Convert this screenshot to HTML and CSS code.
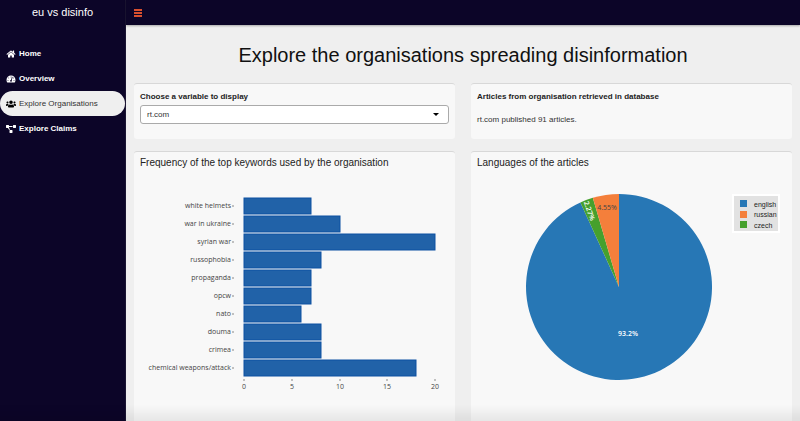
FILE: index.html
```html
<!DOCTYPE html>
<html lang="en">
<head>
<meta charset="utf-8">
<meta name="viewport" content="width=device-width, initial-scale=1">
<title>eu vs disinfo</title>
<link rel="stylesheet" href="styles.css">
</head>
<body>
<div class="app">
  <aside class="sidebar">
    <a class="brand" href="#">eu vs disinfo</a>
    <nav class="menu">
      <a class="menu-item" href="#">
        <svg class="icon" viewBox="0 0 576 512" aria-hidden="true"><path d="M280.37 148.26L96 300.11V464a16 16 0 0 0 16 16l112.06-.29a16 16 0 0 0 15.92-16V368a16 16 0 0 1 16-16h64a16 16 0 0 1 16 16v95.64a16 16 0 0 0 16 16.05L464 480a16 16 0 0 0 16-16V300L295.67 148.26a12.19 12.19 0 0 0-15.3 0zM571.6 251.47L488 182.56V44.05a12 12 0 0 0-12-12h-56a12 12 0 0 0-12 12v72.61L318.47 43a48 48 0 0 0-61 0L4.34 251.47a12 12 0 0 0-1.6 16.9l25.5 31A12 12 0 0 0 45.15 301l235.22-193.74a12.19 12.19 0 0 1 15.3 0L530.9 301a12 12 0 0 0 16.9-1.6l25.5-31a12 12 0 0 0-1.7-16.93z"/></svg>
        <span>Home</span>
      </a>
      <a class="menu-item" href="#">
        <svg class="icon" viewBox="0 0 576 512" aria-hidden="true"><path d="M288 32C128.94 32 0 160.94 0 320c0 52.8 14.25 102.26 39.06 144.8 5.61 9.62 16.3 15.2 27.44 15.2h443c11.14 0 21.83-5.58 27.44-15.2C561.75 422.26 576 372.8 576 320c0-159.06-128.94-288-288-288zm0 64c14.71 0 26.58 10.13 30.32 23.65-1.11 2.26-2.64 4.23-3.45 6.67l-9.22 27.67c-5.13 3.49-10.97 6.01-17.64 6.01-17.67 0-32-14.33-32-32S270.33 96 288 96zM96 384c-17.67 0-32-14.33-32-32s14.33-32 32-32 32 14.33 32 32-14.33 32-32 32zm48-160c-17.67 0-32-14.33-32-32s14.33-32 32-32 32 14.33 32 32-14.33 32-32 32zm246.77-72.41l-61.33 184C343.13 347.33 352 364.54 352 384c0 11.72-3.38 22.55-8.88 32H232.88c-5.5-9.45-8.88-20.28-8.88-32 0-33.94 26.5-61.43 59.9-63.59l61.34-184.01c4.17-12.56 17.73-19.45 30.36-15.17 12.57 4.19 19.35 17.79 15.17 30.36zm14.66 57.2l15.52-46.55c3.47-1.29 7.13-2.23 11.05-2.23 17.67 0 32 14.33 32 32s-14.33 32-32 32c-11.38-.01-20.89-6.28-26.57-15.22zM480 384c-17.67 0-32-14.33-32-32s14.33-32 32-32 32 14.33 32 32-14.33 32-32 32z"/></svg>
        <span>Overview</span>
      </a>
      <a class="menu-item menu-item-active" href="#" aria-current="page">
        <svg class="icon" viewBox="0 0 640 512" aria-hidden="true"><path d="M96 224c35.3 0 64-28.7 64-64s-28.7-64-64-64-64 28.7-64 64 28.7 64 64 64zm448 0c35.3 0 64-28.7 64-64s-28.7-64-64-64-64 28.7-64 64 28.7 64 64 64zm32 32h-64c-17.6 0-33.5 7.1-45.1 18.6 40.3 22.1 68.9 62 75.1 109.4h66c17.7 0 32-14.3 32-32v-32c0-35.3-28.7-64-64-64zm-256 0c61.9 0 112-50.1 112-112S381.9 32 320 32 208 82.1 208 144s50.1 112 112 112zm76.8 32h-8.3c-20.8 10-43.9 16-68.5 16s-47.6-6-68.5-16h-8.3C179.6 288 128 339.6 128 403.2V432c0 26.5 21.5 48 48 48h288c26.5 0 48-21.5 48-48v-28.8c0-63.6-51.6-115.2-115.2-115.2zm-223.7-13.4C161.5 263.1 145.6 256 128 256H64c-35.3 0-64 28.7-64 64v32c0 17.7 14.3 32 32 32h65.9c6.3-47.4 34.9-87.3 75.2-109.4z"/></svg>
        <span>Explore Organisations</span>
      </a>
      <a class="menu-item" href="#">
        <svg class="icon" viewBox="0 0 640 512" aria-hidden="true"><path d="M384 320H256c-17.67 0-32 14.33-32 32v128c0 17.67 14.33 32 32 32h128c17.67 0 32-14.33 32-32V352c0-17.67-14.33-32-32-32zM192 32c0-17.67-14.33-32-32-32H32C14.33 0 0 14.33 0 32v128c0 17.67 14.33 32 32 32h95.72l73.16 128.04C211.98 300.98 232.4 288 256 288h.28L192 175.51V128h224V64H192V32zM608 0H480c-17.67 0-32 14.33-32 32v128c0 17.67 14.33 32 32 32h128c17.67 0 32-14.33 32-32V32c0-17.67-14.33-32-32-32z"/></svg>
        <span>Explore Claims</span>
      </a>
    </nav>
  </aside>

  <div class="page">
    <header class="topbar">
      <button class="toggle" type="button" aria-label="Toggle navigation">
        <svg class="toggle-icon" viewBox="0 0 8 8" aria-hidden="true"><path d="M0 0h8v2H0zM0 3h8v2H0zM0 6h8v2H0z"/></svg>
      </button>
    </header>

    <main class="content">
      <h1 class="title">Explore the organisations spreading disinformation</h1>
      <div class="grid">
        <section class="card card-small">
          <label class="label" for="variable">Choose a variable to display</label>
          <div class="select-wrap">
            <select class="select" id="variable">
              <option>rt.com</option>
            </select>
          </div>
        </section>

        <section class="card card-small">
          <h2 class="label">Articles from organisation retrieved in database</h2>
          <p class="text">rt.com published 91 articles.</p>
        </section>

        <section class="card">
          <h2 class="card-title">Frequency of the top keywords used by the organisation</h2>
          <svg class="chart" viewBox="0 0 309 250" role="img" aria-label="Keyword frequency">
            <g class="bars">
              <rect x="104" y="24" width="67" height="16"/>
              <rect x="104" y="42" width="96" height="16"/>
              <rect x="104" y="60" width="191" height="16"/>
              <rect x="104" y="78" width="77" height="16"/>
              <rect x="104" y="96" width="67" height="16"/>
              <rect x="104" y="114" width="67" height="16"/>
              <rect x="104" y="132" width="57" height="16"/>
              <rect x="104" y="150" width="77" height="16"/>
              <rect x="104" y="168" width="77" height="16"/>
              <rect x="104" y="186" width="172" height="16"/>
            </g>
            <path class="ticks" d="M92 32h2M92 50h2M92 68h2M92 86h2M92 104h2M92 122h2M92 140h2M92 158h2M92 176h2M92 194h2M104 205v2M152 205v2M200 205v2M247 205v2M295 205v2"/>
            <g class="axis axis-y">
              <text x="91" y="34">white helmets</text>
              <text x="91" y="52">war in ukraine</text>
              <text x="91" y="70">syrian war</text>
              <text x="91" y="88">russophobia</text>
              <text x="91" y="106">propaganda</text>
              <text x="91" y="124">opcw</text>
              <text x="91" y="142">nato</text>
              <text x="91" y="160">douma</text>
              <text x="91" y="178">crimea</text>
              <text x="91" y="196">chemical weapons/attack</text>
            </g>
            <g class="axis axis-x">
              <text x="104" y="215">0</text>
              <text x="152" y="215">5</text>
              <text x="200" y="215">10</text>
              <text x="247" y="215">15</text>
              <text x="295" y="215">20</text>
            </g>
          </svg>
        </section>

        <section class="card">
          <h2 class="card-title">Languages of the articles</h2>
          <svg class="chart" viewBox="0 0 309 250" role="img" aria-label="Share of languages">
            <path class="english" d="M142 113V20A93 93 0 1 1 103.4 28.4Z"/>
            <path class="czech" d="M142 113L103.4 28.4A93 93 0 0 1 115.8 23.8Z"/>
            <path class="russian" d="M142 113L115.8 23.8A93 93 0 0 1 142 20Z"/>
            <text class="slice slice-light" x="151" y="162">93.2%</text>
            <text class="slice slice-dark" x="130" y="36">4.55%</text>
            <text class="slice slice-light" transform="translate(112 37) rotate(70)" y="2">2.27%</text>
            <rect class="legend" x="256" y="21" width="46" height="37"/>
            <rect class="english" x="263" y="26" width="7" height="7"/>
            <rect class="russian" x="263" y="37" width="7" height="7"/>
            <rect class="czech" x="263" y="47" width="7" height="7"/>
            <g class="legend-text">
              <text x="277" y="33">english</text>
              <text x="277" y="43">russian</text>
              <text x="277" y="54">czech</text>
            </g>
          </svg>
        </section>
      </div>
    </main>
  </div>
</div>
</body>
</html>
```
FILE: styles.css
```css
* {
  box-sizing: border-box;
}

body {
  margin: 0;
  font-family: "Liberation Sans", Arial, sans-serif;
  font-size: 8px;
  line-height: 12px;
  color: #333;
  background: #efefef;
}

h1, h2, p {
  margin: 0;
  font-weight: 400;
}

.app {
  display: flex;
  height: 100vh;
  overflow: hidden;
}

.app::after {
  content: "";
  position: fixed;
  inset: auto 0 0 0;
  height: 16px;
  background: linear-gradient(transparent, rgba(0, 0, 0, 0.07));
  pointer-events: none;
}

.sidebar {
  flex: 0 0 126px;
  background: #0c0528;
  border-right: 1px solid #1b1533;
}

.brand {
  display: block;
  height: 25px;
  line-height: 25px;
  font-size: 11px;
  text-align: center;
  color: #fff;
  text-decoration: none;
}

.menu {
  display: flex;
  flex-direction: column;
  padding-top: 16px;
}

.menu-item {
  display: flex;
  align-items: center;
  gap: 3px;
  height: 25px;
  padding-left: 6px;
  font-weight: 700;
  color: #fff;
  text-decoration: none;
}

.menu-item-active {
  font-weight: 400;
  color: #333;
  background: #efefef;
  border-radius: 13px;
}

.icon {
  width: 10px;
  height: 8px;
  fill: currentColor;
}

.menu-item-active .icon {
  fill: #000;
}

.page {
  flex: 1;
  min-width: 0;
}

.topbar {
  display: flex;
  align-items: center;
  height: 25px;
  padding-left: 8px;
  background: #0c0528;
  box-shadow: 0 1px 2px rgba(0, 0, 0, 0.3);
}

.toggle {
  display: flex;
  padding: 0;
  border: 0;
  background: none;
}

.toggle-icon {
  width: 8px;
  height: 8px;
  fill: #d9502f;
}

.content {
  padding: 18px 8px;
}

.title {
  margin-bottom: 16px;
  font-size: 20px;
  line-height: 24px;
  text-align: center;
  color: #111;
}

.grid {
  display: grid;
  grid-template-columns: 1fr 1fr;
  gap: 12px 16px;
}

.card {
  padding: 5px 6px;
  background: #f8f8f8;
  border-top: 1px solid #d8d8d8;
  border-radius: 3px;
}

.card-small {
  padding-top: 7px;
  padding-bottom: 13px;
}

.label {
  display: block;
  margin-bottom: 2px;
  font-size: 8px;
  font-weight: 700;
  color: #222;
}

.select-wrap {
  position: relative;
}

.select-wrap::after {
  content: "";
  position: absolute;
  top: 8px;
  right: 10px;
  border: 3px solid transparent;
  border-top-color: #000;
  border-bottom: 0;
  pointer-events: none;
}

.select {
  display: block;
  width: 100%;
  height: 19px;
  padding: 0 6px;
  font: inherit;
  color: #333;
  background: #fff;
  border: 1px solid #aaa;
  border-radius: 3px;
  appearance: none;
}

.text {
  padding-top: 9px;
}

.card-title {
  font-size: 10px;
  line-height: 12px;
  color: #222;
}

.chart {
  display: block;
  width: 100%;
  margin-top: 5px;
  font-family: "Open Sans", sans-serif;
  font-size: 7px;
}

.bars rect {
  fill: #2162a8;
  stroke: #0c51a2;
  stroke-width: 1px;
}

.ticks {
  stroke: #888;
  stroke-width: 1px;
}

.axis {
  fill: #444;
}

.axis-y {
  text-anchor: end;
}

.axis-x {
  text-anchor: middle;
}

.english {
  fill: #2777b5;
}

.russian {
  fill: #f47f3b;
}

.czech {
  fill: #46a02d;
}

.slice {
  text-anchor: middle;
}

.slice-light {
  fill: #fff;
  font-weight: 600;
}

.slice-dark {
  fill: #444;
}

.legend {
  fill: #e2e2e2;
  stroke: #fff;
  stroke-width: 2px;
}

.legend-text {
  font-family: "Liberation Sans", Arial, sans-serif;
  fill: #222;
}
```
